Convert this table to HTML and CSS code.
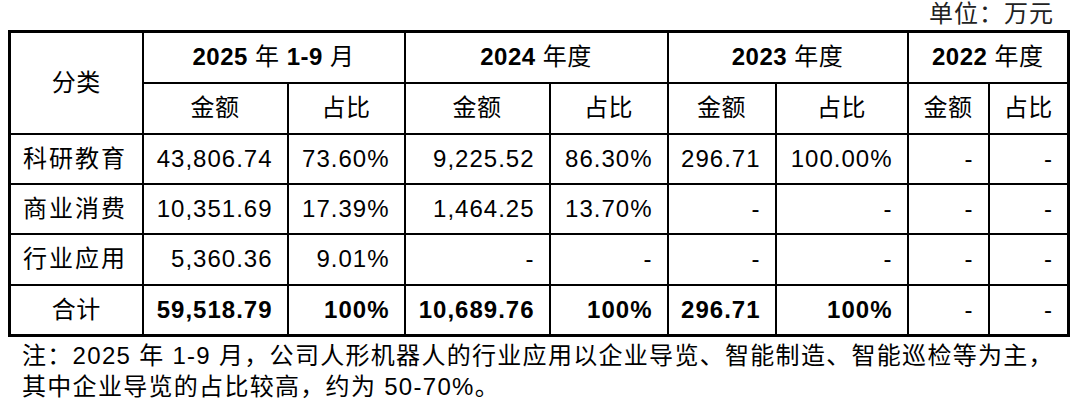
FILE: index.html
```html
<!DOCTYPE html>
<html lang="zh">
<head>
<meta charset="utf-8">
<link rel="stylesheet" href="styles.css">
</head>
<body>
<div class="page">
  <div class="unit">单位：万元</div>
  <table class="tbl">
    <colgroup>
      <col class="w-cat"><col class="w-145"><col class="w-117"><col class="w-145"><col class="w-118"><col class="w-108"><col class="w-132"><col class="w-81"><col class="w-80">
    </colgroup>
    <thead>
      <tr class="row-a">
        <th rowspan="2" class="hd">分类</th>
        <th colspan="2" class="hd"><b>2025</b> 年 <b>1-9</b> 月</th>
        <th colspan="2" class="hd"><b>2024</b> 年度</th>
        <th colspan="2" class="hd"><b>2023</b> 年度</th>
        <th colspan="2" class="hd"><b>2022</b> 年度</th>
      </tr>
      <tr class="row-b">
        <th class="hd">金额</th><th class="hd">占比</th>
        <th class="hd">金额</th><th class="hd">占比</th>
        <th class="hd">金额</th><th class="hd">占比</th>
        <th class="hd">金额</th><th class="hd">占比</th>
      </tr>
    </thead>
    <tbody>
      <tr class="row-c">
        <td class="cat">科研教育</td>
        <td class="num">43,806.74</td><td class="num">73.60%</td>
        <td class="num">9,225.52</td><td class="num">86.30%</td>
        <td class="num">296.71</td><td class="num">100.00%</td>
        <td class="num">-</td><td class="num">-</td>
      </tr>
      <tr class="row-c">
        <td class="cat">商业消费</td>
        <td class="num">10,351.69</td><td class="num">17.39%</td>
        <td class="num">1,464.25</td><td class="num">13.70%</td>
        <td class="num">-</td><td class="num">-</td>
        <td class="num">-</td><td class="num">-</td>
      </tr>
      <tr class="row-d">
        <td class="cat">行业应用</td>
        <td class="num">5,360.36</td><td class="num">9.01%</td>
        <td class="num">-</td><td class="num">-</td>
        <td class="num">-</td><td class="num">-</td>
        <td class="num">-</td><td class="num">-</td>
      </tr>
      <tr class="row-d total">
        <td class="hd">合计</td>
        <td class="num"><b>59,518.79</b></td><td class="num"><b>100%</b></td>
        <td class="num"><b>10,689.76</b></td><td class="num"><b>100%</b></td>
        <td class="num"><b>296.71</b></td><td class="num"><b>100%</b></td>
        <td class="num">-</td><td class="num">-</td>
      </tr>
    </tbody>
  </table>
  <div class="note">
    <span class="note-line">注：2025 年 1-9 月，公司人形机器人的行业应用以企业导览、智能制造、智能巡检等为主，</span>
    <span class="note-line">其中企业导览的占比较高，约为 50-70%。</span>
  </div>
</div>
</body>
</html>
```

FILE: styles.css
```css
html, body {
  margin: 0;
  padding: 0;
  background: #ffffff;
}

.page {
  padding: 0 8px;
  font-family: "Liberation Sans", "Noto Sans CJK SC", sans-serif;
  font-size: 24px;
  color: #000;
}

.unit {
  height: 30px;
  line-height: 28px;
  text-align: right;
  padding-right: 18px;
  letter-spacing: 1px;
  color: #222;
}

.tbl {
  border-collapse: collapse;
  table-layout: fixed;
  width: 1062px;
  border: 3px solid #000;
}

.w-cat { width: 133px; }
.w-145 { width: 145px; }
.w-117 { width: 117px; }
.w-118 { width: 118px; }
.w-108 { width: 108px; }
.w-132 { width: 132px; }
.w-81 { width: 81px; }
.w-80 { width: 80px; }

.tbl th,
.tbl td {
  border: 2px solid #000;
  padding: 0;
  line-height: 28px;
  vertical-align: middle;
  white-space: nowrap;
  font-weight: normal;
}

.row-a, .row-b { height: 51px; }
.row-c { height: 50px; }
.row-d { height: 51px; }

.hd {
  text-align: center;
  letter-spacing: 0.5px;
}

.hd b, .num b {
  font-weight: bold;
}

.cat {
  text-align: left;
  padding-left: 12px !important;
  letter-spacing: 2px;
}

.num {
  text-align: right;
  padding-right: 14px !important;
  letter-spacing: 1px;
}

.note {
  padding: 3px 0 0 14px;
  line-height: 31px;
  letter-spacing: 1.3px;
}

.note-line {
  display: block;
  white-space: nowrap;
}
```
